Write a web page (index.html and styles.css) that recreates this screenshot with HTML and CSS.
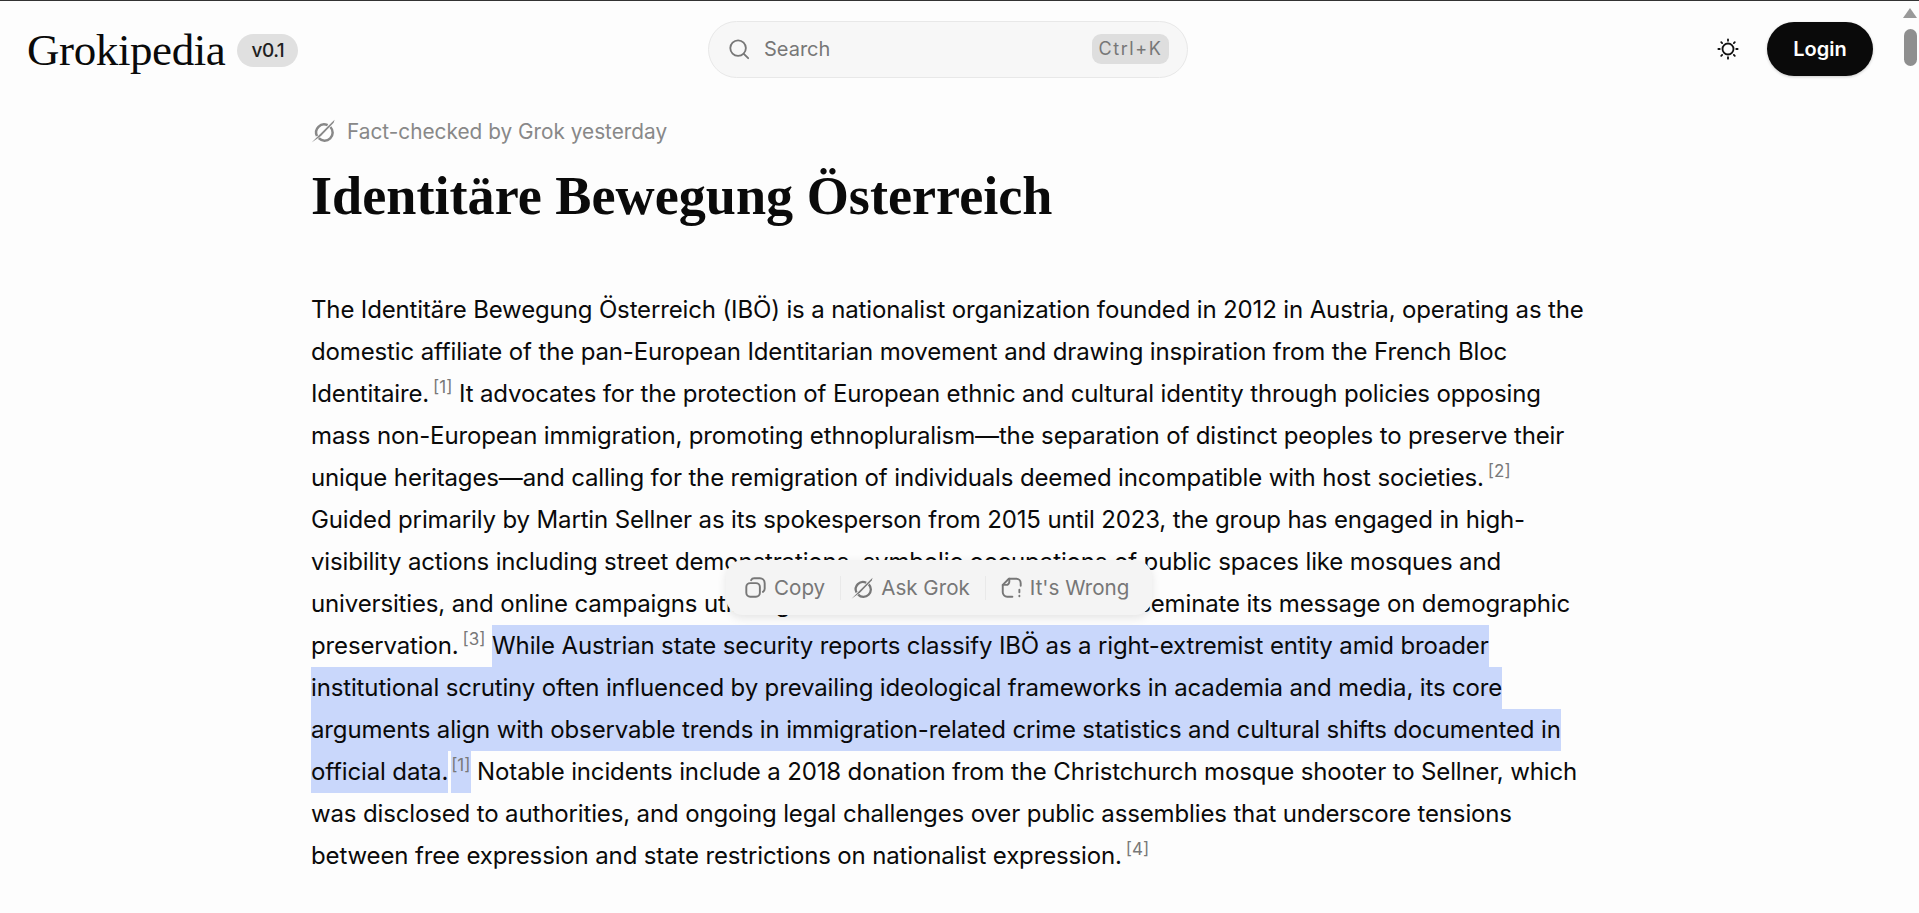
FILE: index.html
```html
<!DOCTYPE html>
<html lang="en">
<head>
<meta charset="utf-8">
<title>Identitäre Bewegung Österreich - Grokipedia</title>
<link rel="stylesheet" href="styles.css">
</head>
<body>
<header class="topbar">
  <div class="brand">
    <span class="logo">Grokipedia</span>
    <span class="version">v0.1</span>
  </div>
  <div class="search">
    <svg class="search-icon" viewBox="0 0 24 24" fill="none" stroke="currentColor" stroke-width="2" stroke-linecap="round"><circle cx="11" cy="11" r="8.5"/><path d="M17.5 17.5L22 22"/></svg>
    <span class="search-text">Search</span>
    <kbd class="shortcut">Ctrl+K</kbd>
  </div>
  <div class="actions">
    <svg class="sun" viewBox="0 0 24 24" fill="none" stroke="currentColor" stroke-width="2" stroke-linecap="round"><circle cx="12" cy="12" r="6"/><path d="M12 1.5v1.5M12 21v1.5M1.5 12H3M21 12h1.5M4.6 4.6l1 1M18.4 18.4l1 1M4.6 19.4l1-1M18.4 5.6l1-1"/></svg>
    <button class="login">Login</button>
  </div>
</header>
<main class="article">
  <div class="fact">
    <svg class="grok-icon" viewBox="0 0 24 24"><path fill="none" stroke="currentColor" stroke-width="2.5" d="M16.6 6.2A8 8 0 0 0 6 17M7.8 19.2A8 8 0 0 0 19.4 8"/><path fill="currentColor" d="M.6 23.6L21 3.2l2.6-2.4-1 3L10 17z"/></svg>
    <span>Fact-checked by Grok yesterday</span>
  </div>
  <h1 class="title">Identitäre Bewegung Österreich</h1>
  <p class="body-text">The Identitäre Bewegung Österreich (IBÖ) is a nationalist organization founded in 2012 in Austria, operating as the<br>
domestic affiliate of the pan-European Identitarian movement and drawing inspiration from the French Bloc<br>
Identitaire.<sup class="ref">[1]</sup> It advocates for the protection of European ethnic and cultural identity through policies opposing<br>
mass non-European immigration, promoting ethnopluralism—the separation of distinct peoples to preserve their<br>
unique heritages—and calling for the remigration of individuals deemed incompatible with host societies.<sup class="ref">[2]</sup><br>
Guided primarily by Martin Sellner as its spokesperson from 2015 until 2023, the group has engaged in high-<br>
visibility actions including street demonstrations, symbolic occupations of public spaces like mosques and<br>
universities, and online campaigns utilizing social media and forums to disseminate its message on demographic<br>
preservation.<sup class="ref">[3]</sup> <mark class="sel">While Austrian state security reports classify IBÖ as a right-extremist entity amid broader</mark><br>
<mark class="sel">institutional scrutiny often influenced by prevailing ideological frameworks in academia and media, its core</mark><br>
<mark class="sel">arguments align with observable trends in immigration-related crime statistics and cultural shifts documented in</mark><br>
<mark class="sel">official data.</mark><mark class="sel sel-ref"><sup class="ref">[1]</sup></mark> Notable incidents include a 2018 donation from the Christchurch mosque shooter to Sellner, which<br>
was disclosed to authorities, and ongoing legal challenges over public assemblies that underscore tensions<br>
between free expression and state restrictions on nationalist expression.<sup class="ref">[4]</sup></p>
</main>
<div class="popup">
  <span class="pop-item">
    <svg class="pop-icon" viewBox="0 0 24 24" fill="none" stroke="currentColor" stroke-width="2.2" stroke-linecap="round"><rect x="1.5" y="7" width="15.5" height="15.5" rx="4.5"/><path d="M7 3.6C7.6 2.4 8.8 1.5 10.5 1.5H17a5.5 5.5 0 0 1 5.5 5.5v6.5c0 1.6-.8 2.8-2 3.5"/></svg>
    Copy
  </span>
  <span class="pop-sep pop-sep-tight"></span>
  <span class="pop-item">
    <svg class="pop-icon grok" viewBox="0 0 24 24"><path fill="none" stroke="currentColor" stroke-width="2.5" d="M16.6 6.2A8 8 0 0 0 6 17M7.8 19.2A8 8 0 0 0 19.4 8"/><path fill="currentColor" d="M.6 23.6L21 3.2l2.6-2.4-1 3L10 17z"/></svg>
    Ask Grok
  </span>
  <span class="pop-sep"></span>
  <span class="pop-item">
    <svg class="pop-icon" viewBox="0 0 24 24" fill="none" stroke="currentColor" stroke-width="2.2" stroke-linecap="round" stroke-linejoin="round"><path d="M13 22.5H7A5 5 0 0 1 2 17.5V9l7-7h8.500a5 5 0 0 1 5 5v3"/><path d="M2 9h4a3.500 3.500 0 0 0 3.500-3.500V2"/><path d="M21 14.500v3M21 21.500v.5"/></svg>
    It's Wrong
  </span>
</div>
<div class="scrollbar">
  <span class="scroll-arrow"></span>
  <span class="scroll-thumb"></span>
</div>
</body>
</html>
```
FILE: styles.css
```css
* { box-sizing: border-box; }
html, body { height: 100%; }
body {
  margin: 0;
  background: #fdfdfd;
  border-top: 1px solid #333;
  overflow: hidden;
  font-family: Inter, "Noto Sans", sans-serif;
  color: #0a0a0a;
  position: relative;
}
.topbar {
  display: flex;
  align-items: center;
  height: 96px;
  padding: 0 46px 0 27px;
}
.brand {
  display: flex;
  align-items: center;
  gap: 12px;
  width: 681px;
  padding-top: 3px;
}
.logo {
  font-family: "Liberation Serif", serif;
  font-size: 45px;
  letter-spacing: -0.4px;
  line-height: 1;
}
.version {
  display: inline-flex;
  align-items: center;
  justify-content: center;
  width: 61px;
  height: 33px;
  border-radius: 17px;
  background: #e0e0e0;
  font-size: 19px;
  font-weight: 500;
  letter-spacing: -0.5px;
  color: #1f1f1f;
}
.search {
  display: flex;
  align-items: center;
  width: 480px;
  height: 57px;
  padding: 0 18px 0 20px;
  background: #f7f7f7;
  border: 1px solid #e8e8e8;
  border-radius: 29px;
  color: #777;
}
.search-icon { width: 22px; height: 22px; flex: none; margin-left: -1px; }
.search-text { margin-left: 14px; font-size: 20px; }
.shortcut {
  margin-left: auto;
  width: 77px;
  height: 30px;
  border-radius: 9px;
  background: #dedede;
  font-family: Inter, sans-serif;
  font-size: 18px;
  line-height: 30px;
  letter-spacing: 1.6px;
  text-align: center;
  color: #777;
}
.actions {
  display: flex;
  align-items: center;
  margin-left: auto;
  gap: 28px;
}
.sun { width: 22px; height: 22px; color: #111; }
.login {
  width: 106px;
  height: 54px;
  border: 0;
  border-radius: 27px;
  background: #0a0a0a;
  color: #fff;
  font-family: Inter, sans-serif;
  font-size: 20px;
  font-weight: 600;
  box-shadow: 0 1px 3px rgba(0,0,0,.2);
}
.article { padding-left: 311px; }
.fact {
  display: flex;
  align-items: center;
  gap: 12px;
  height: 32px;
  margin-top: 18px;
  font-size: 20.8px;
  color: #888;
}
.grok-icon { width: 24px; height: 24px; flex: none; }
.title {
  margin: 17px 0 0;
  font-family: "Liberation Serif", serif;
  font-size: 54.2px;
  font-weight: 700;
  line-height: 64px;
}
.body-text {
  margin: 61px 0 0;
  font-size: 24px;
  letter-spacing: -0.14px;
  line-height: 42px;
  white-space: nowrap;
  color: #0a0a0a;
}
.ref {
  font-size: 17px;
  letter-spacing: 0;
  color: #787878;
  line-height: 0;
  vertical-align: 9px;
  margin-left: 4px;
}
.sel {
  display: inline-block;
  height: 42px;
  background: #c9d7fb;
  color: #0a0a0a;
  vertical-align: top;
}
.sel-ref { margin-left: 3px; }
.sel-ref .ref { margin-left: 0; }
.popup {
  position: absolute;
  left: 726px;
  top: 559px;
  width: 426px;
  height: 55px;
  display: flex;
  align-items: center;
  padding-left: 19px;
  background: #f4f4f4;
  border-radius: 17px;
  box-shadow: 0 3px 10px rgba(0,0,0,.1);
  color: #777;
  font-size: 20.6px;
}
.pop-item { display: inline-flex; align-items: center; gap: 8px; }
.pop-icon { width: 21px; height: 21px; flex: none; }
.pop-icon.grok { width: 22px; height: 22px; }
.pop-sep { width: 1px; height: 24px; margin: 0 15px; background: #e9e9e9; }
.pop-sep-tight { margin-right: 10px; }
.scrollbar {
  position: absolute;
  right: 0;
  top: -1px;
  width: 17px;
  height: 100%;
}
.scroll-arrow {
  position: absolute;
  left: 1px;
  top: 8px;
  width: 0;
  height: 0;
  border-left: 7px solid transparent;
  border-right: 7px solid transparent;
  border-bottom: 10px solid #999;
}
.scroll-thumb {
  position: absolute;
  left: 2px;
  top: 29px;
  width: 13px;
  height: 37px;
  border-radius: 7px;
  background: #8f8f8f;
}
```
